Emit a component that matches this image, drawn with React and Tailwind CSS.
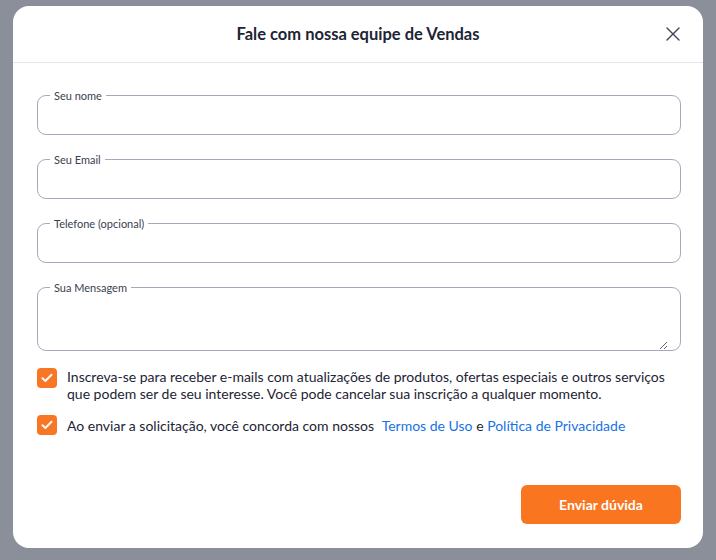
const fields = [
  { label: "Seu nome", type: "text" },
  { label: "Seu Email", type: "email" },
  { label: "Telefone (opcional)", type: "tel" },
];

function Field({ label, children }) {
  return (
    <fieldset className="rounded-[9px] border border-[#a3abbb] px-3">
      <legend className="px-1 text-[11px] leading-none text-[#39414f]">{label}</legend>
      {children}
    </fieldset>
  );
}

function Check() {
  return (
    <span className="flex h-5 w-5 shrink-0 items-center justify-center rounded-[4px] bg-[#f97625]">
      <svg width="14" height="14" viewBox="0 0 14 14" fill="none">
        <path d="M2.5 7.3 5.4 10 11.5 3.8" stroke="white" strokeWidth="2" strokeLinecap="round" strokeLinejoin="round" />
      </svg>
    </span>
  );
}

export default function App() {
  return (
    <div className="flex h-[560px] w-[716px] items-start justify-center bg-[#8a8f99] pt-[6px] font-['Lato',sans-serif]">
      <div className="w-[690px] rounded-[16px] bg-white">
        <div className="relative flex h-[57px] items-center justify-center border-b border-[#e3e5ec]">
          <h1 className="text-[16.5px] font-bold text-[#1d2435]">Fale com nossa equipe de Vendas</h1>
          <button type="button" className="absolute right-[22px] top-[20px] text-[#3b4352]" aria-label="Fechar">
            <svg width="16" height="16" viewBox="0 0 16 16" fill="none">
              <path d="M2 2l12 12M14 2 2 14" stroke="currentColor" strokeWidth="1.4" strokeLinecap="round" />
            </svg>
          </button>
        </div>

        <form className="pl-6 pr-[22px] pt-[27px] pb-6">
          <div className="flex flex-col gap-[19px]">
            {fields.map((f) => (
              <Field key={f.label} label={f.label}>
                <input type={f.type} className="block h-[33px] w-full bg-transparent text-sm outline-none" />
              </Field>
            ))}
            <Field label="Sua Mensagem">
              <textarea className="block h-[57px] w-full resize-y bg-transparent text-sm outline-none" />
            </Field>
          </div>

          <div className="mt-[17px] flex gap-[10px]">
            <Check />
            <p className="text-[14px] leading-[17px] text-[#1d2435]">
              Inscreva-se para receber e-mails com atualizações de produtos, ofertas especiais e outros serviços que podem ser de seu interesse. Você pode cancelar sua inscrição a qualquer momento.
            </p>
          </div>

          <div className="mt-[13px] flex items-center gap-[10px]">
            <Check />
            <p className="text-[14px] leading-[17px] text-[#1d2435]">
              Ao enviar a solicitação, você concorda com nossos{" "}
              <a className="ml-1 text-[#1673e6]">Termos de Uso</a> e{" "}
              <a className="text-[#1673e6]">Política de Privacidade</a>
            </p>
          </div>

          <div className="mt-[50px] flex justify-end">
            <button type="button" className="h-[39px] w-[160px] rounded-md bg-[#f97520] text-[14px] font-bold text-white">
              Enviar dúvida
            </button>
          </div>
        </form>
      </div>
    </div>
  );
}
